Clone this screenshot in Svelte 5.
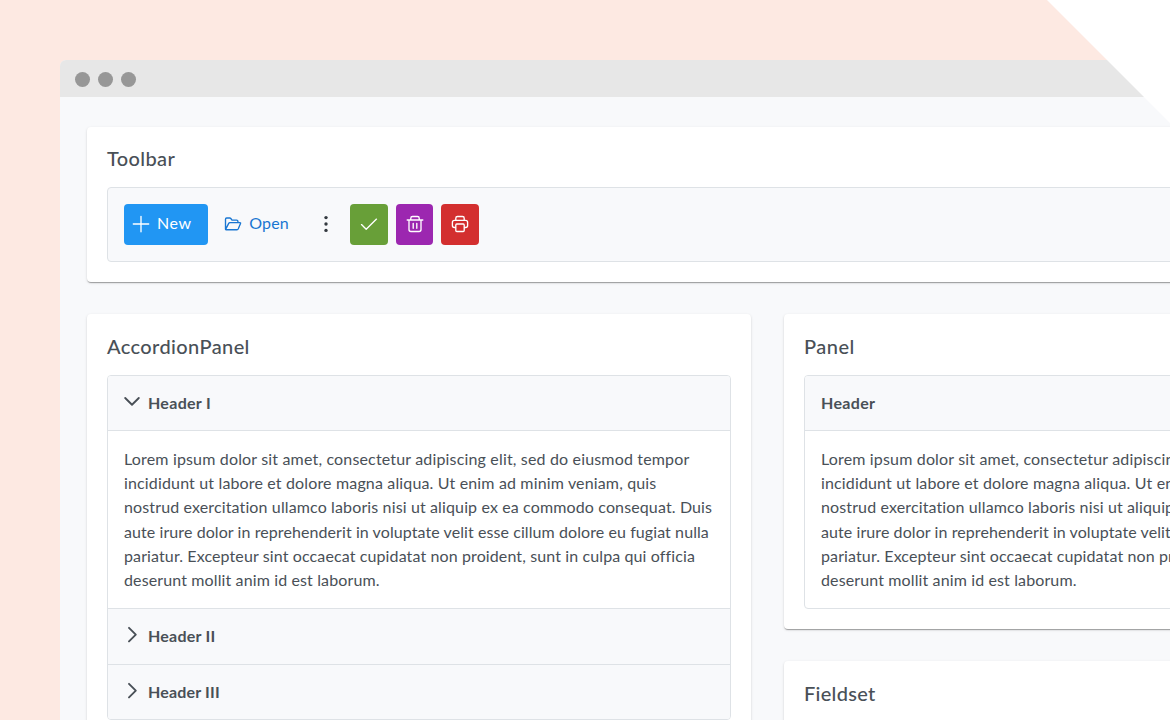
<script>
  const lines = [
    ['Lorem ipsum dolor sit amet, consectetur adipiscing elit, sed do eiusmod tempor', 565.3],
    ['incididunt ut labore et dolore magna aliqua. Ut enim ad minim veniam, quis', 532.3],
    ['nostrud exercitation ullamco laboris nisi ut aliquip ex ea commodo consequat. Duis', 588.3],
    ['aute irure dolor in reprehenderit in voluptate velit esse cillum dolore eu fugiat nulla', 584.8],
    ['pariatur. Excepteur sint occaecat cupidatat non proident, sunt in culpa qui officia', 570],
    ['deserunt mollit anim id est laborum.', 255.5]
  ];

  // Tracks a text run so that it fills the given measure.
  function fit(node, width) {
    const natural = node.getBoundingClientRect().width;
    const gaps = node.textContent.length - 1;
    node.style.letterSpacing = `${(width - natural) / gaps}px`;
  }
</script>

{#snippet copy()}
  <div class="copy">
    {#each lines as [text, width]}
      <div class="line"><span use:fit={width}>{text}</span></div>
    {/each}
  </div>
{/snippet}

<main>
  <div class="window">
    <div class="titlebar"><i></i><i></i><i></i></div>
    <div class="content">
      <section class="card toolbar-card">
        <h2><span use:fit={67.8}>Toolbar</span></h2>
        <div class="toolbar">
          <button class="new">
            <svg width="18" height="18" viewBox="0 0 18 18"><path d="M9 1.3v15.4M1.3 9h15.4" /></svg>
            <span use:fit={34}>New</span>
          </button>
          <button class="open">
            <svg width="18" height="18" viewBox="0 0 18 18"><path d="M1.5 14V4.2Q1.5 3 2.7 3h3.1q.6 0 1 .5l1.2 1.6h4.6q1.3 0 1.3 1.2v1.2M1.6 14.4l3.1-6q.4-.8 1.2-.8h10q1 0 .6.9l-2.2 5.3q-.4.9-1.3.9H2.1q-.9 0-.5-.8z" /></svg>
            <span use:fit={39.5}>Open</span>
          </button>
          <svg class="dots" width="6" height="18" viewBox="0 0 6 18"><circle cx="3" cy="2.6" r="1.7" /><circle cx="3" cy="9" r="1.7" /><circle cx="3" cy="15.4" r="1.7" /></svg>
          <button class="square green" aria-label="Confirm">
            <svg width="18" height="18" viewBox="0 0 18 18"><path d="M1.5 9.6l4.7 4.7L16.5 4.1" /></svg>
          </button>
          <button class="square purple" aria-label="Delete">
            <svg width="18" height="18" viewBox="0 0 18 18"><path d="M1.2 5h15.6M3 5v9.5q0 2 2 2h8q2 0 2-2V5M4.8 4.8V3.2q0-1.7 1.7-1.7h5q1.7 0 1.7 1.7v1.6M7.2 8.3v4.9M10.8 8.3v4.9" /></svg>
          </button>
          <button class="square red" aria-label="Print">
            <svg width="18" height="18" viewBox="0 0 18 18"><path d="M4.8 12.5H3.4q-2 0-2-2V7.4q0-2 2-2h11.2q2 0 2 2v3.1q0 2-2 2h-1.4M4.8 5.2v-2q0-1.7 1.7-1.7h5q1.7 0 1.7 1.7v2M5.8 9h6.4q1 0 1 1v5.5q0 1-1 1H5.8q-1 0-1-1V10q0-1 1-1z" /></svg>
          </button>
        </div>
      </section>

      <div class="columns">
        <section class="card accordion-card">
          <h2><span use:fit={142.4}>AccordionPanel</span></h2>
          <div class="box">
            <div class="head">
              <svg width="16" height="16" viewBox="0 0 16 16"><path d="M1.2 4l6.8 6.7L14.8 4" /></svg>
              <span use:fit={62.7}>Header I</span>
            </div>
            {@render copy()}
            <div class="head ruled">
              <svg width="16" height="16" viewBox="0 0 16 16"><path d="M5 .8l6.8 6.8L5 14.4" /></svg>
              <span use:fit={67.2}>Header II</span>
            </div>
            <div class="head ruled">
              <svg width="16" height="16" viewBox="0 0 16 16"><path d="M5 .8l6.8 6.8L5 14.4" /></svg>
              <span use:fit={71.7}>Header III</span>
            </div>
          </div>
        </section>

        <div class="side">
          <section class="card">
            <h2><span use:fit={50.3}>Panel</span></h2>
            <div class="box">
              <div class="head"><span use:fit={54}>Header</span></div>
              {@render copy()}
            </div>
          </section>
          <section class="card fieldset">
            <h2><span use:fit={71.3}>Fieldset</span></h2>
          </section>
        </div>
      </div>
    </div>
  </div>
  <div class="corner"></div>
</main>

<style>
  :global(body) {
    margin: 0;
  }

  main {
    position: relative;
    box-sizing: border-box;
    width: 1170px;
    height: 720px;
    padding: 60px 0 0 60px;
    overflow: hidden;
    background: #fde9e2;
    color: #495057;
    font: 16px/24px Lato, sans-serif;
  }

  .window {
    width: 1400px;
    height: 800px;
    overflow: hidden;
    border-radius: 6px 0 0;
    background: #f8f9fb;
  }

  .titlebar {
    display: flex;
    align-items: center;
    gap: 8px;
    box-sizing: border-box;
    height: 37px;
    padding: 2px 0 0 15.4px;
    background: #e7e7e7;
  }

  .titlebar i {
    width: 15px;
    height: 15px;
    border-radius: 50%;
    background: #979797;
  }

  .content {
    padding: 29.5px 27px;
  }

  .card {
    box-sizing: border-box;
    padding: 20px;
    border-radius: 4px;
    background: #fff;
    box-shadow: 0 2px 1px -1px rgba(0, 0, 0, 0.2), 0 1px 1px rgba(0, 0, 0, 0.14), 0 1px 3px rgba(0, 0, 0, 0.12);
  }

  .toolbar-card {
    height: 155.7px;
  }

  h2 {
    height: 24px;
    margin: 0 0 16.4px;
    font-size: 20px;
    font-weight: 500;
    line-height: 23px;
    white-space: nowrap;
  }

  .toolbar {
    display: flex;
    align-items: center;
    box-sizing: border-box;
    height: 75px;
    padding: 0 16px;
    border: 1px solid #dee2e6;
    border-radius: 4px;
    background: #f8f9fb;
  }

  button {
    display: flex;
    align-items: center;
    box-sizing: border-box;
    height: 41px;
    padding: 0;
    border: 0;
    border-radius: 4px;
    background: none;
    color: #fff;
    font: inherit;
    white-space: nowrap;
  }

  button span {
    margin-top: -2px;
  }

  svg {
    flex: none;
    overflow: visible;
    fill: none;
    stroke: currentColor;
    stroke-width: 1.35;
    stroke-linecap: round;
    stroke-linejoin: round;
  }

  .new {
    width: 84px;
    padding-left: 8px;
    gap: 7px;
    background: #2196f3;
  }

  .open {
    width: 96px;
    padding-left: 16.3px;
    gap: 7px;
    color: #1976d2;
  }

  .dots {
    margin: 0 21px 0 19px;
    fill: #343a40;
    stroke: none;
  }

  .square {
    justify-content: center;
    width: 37.7px;
    margin-right: 8px;
  }

  .green {
    background: #689f38;
  }

  .purple {
    background: #9c27b0;
  }

  .red {
    background: #d32f2f;
  }

  .columns {
    display: flex;
    gap: 32.6px;
    margin-top: 32px;
  }

  .columns h2 {
    line-height: 24px;
  }

  .accordion-card {
    flex: none;
    width: 664.4px;
    height: 440px;
  }

  .side {
    flex: 1;
  }

  .box {
    overflow: hidden;
    border: 1px solid #dee2e6;
    border-radius: 4px;
  }

  .head {
    display: flex;
    align-items: center;
    gap: 8px;
    box-sizing: border-box;
    height: 54.7px;
    padding: 0 16px;
    background: #f8f9fb;
    font-weight: 700;
    white-space: nowrap;
  }

  .head svg {
    margin-top: -2px;
    stroke-width: 1.9;
  }

  .ruled {
    height: 55.4px;
    border-top: 1px solid #dee2e6;
  }

  .copy {
    height: 178px;
    box-sizing: border-box;
    padding: 16px;
    border-top: 1px solid #dee2e6;
  }

  .line {
    height: 24.1px;
    white-space: nowrap;
  }

  .fieldset {
    height: 200px;
    margin-top: 32px;
  }

  .corner {
    position: absolute;
    top: 0;
    right: 0;
    width: 123px;
    height: 123px;
    background: #fff;
    clip-path: polygon(0 0, 100% 0, 100% 100%);
  }
</style>
